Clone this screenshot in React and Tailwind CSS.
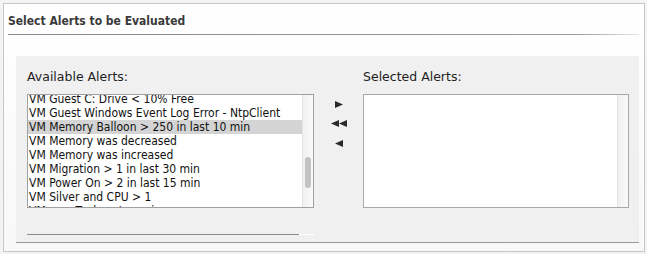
import React from 'react';

const alerts = [
  'VM Guest C: Drive < 10% Free',
  'VM Guest Windows Event Log Error - NtpClient',
  'VM Memory Balloon > 250 in last 10 min',
  'VM Memory was decreased',
  'VM Memory was increased',
  'VM Migration > 1 in last 30 min',
  'VM Power On > 2 in last 15 min',
  'VM Silver and CPU > 1',
  'VMware Tools not running',
];

const selectedIndex = 2;

const Arrow = ({ dir = 'right', double = false }) => {
  const tri = dir === 'right' ? 'M0 0 L8 3.5 L0 7 Z' : 'M8 0 L0 3.5 L8 7 Z';
  return (
    <svg width={double ? 16 : 8} height="7" viewBox={double ? '0 0 16 7' : '0 0 8 7'}>
      <path d={tri} fill="#2a2a2a" />
      {double && <path d={tri} fill="#2a2a2a" transform="translate(8 0)" />}
    </svg>
  );
};

const ScrollTrack = ({ thumb }) => (
  <div className="w-[11px] h-full bg-gradient-to-r from-[#f0f0f0] to-[#fafafa] border-l border-[#e4e4e4] relative">
    {thumb && (
      <div className="absolute left-[2px] top-[62px] w-[6px] h-[31px] rounded-full bg-[#c3c3c3]" />
    )}
  </div>
);

const condensed = { fontFamily: '"DejaVu Sans Condensed", "DejaVu Sans", sans-serif' };

export default function App() {
  return (
    <div className="w-[647px] h-[254px] bg-[#f3f3f3] pt-[3px] pl-[3px]" style={{ fontFamily: '"DejaVu Sans", "Liberation Sans", sans-serif' }}>
      <div className="w-[642px] h-[249px] border border-[#c8c8c8] bg-gradient-to-b from-white to-[#f8f8f8] flex flex-col">
        <div className="pl-[4px] pr-[4px] pt-[10px]">
          <div className="text-[12px] font-bold text-[#3a3a3a] leading-[15px]" style={condensed}>
            Select Alerts to be Evaluated
          </div>
          <div className="mt-[5px] h-px w-[631px] bg-gradient-to-r from-[#8a8a8a] via-[#9a9a9a] via-90% to-[#e8e8e8]" />
        </div>

        <div className="ml-[12px] mt-[21px] w-[623px] h-[187px] bg-[#f0f0f0] border-b border-[#999] pl-[11px] pr-[10px] pt-[13px] flex">
          <div className="flex flex-col">
            <div className="text-[12.5px] text-[#1e1e1e] leading-[16px] h-[25px]">Available Alerts:</div>
            <div className="w-[287px] h-[114px] border border-[#9f9f9f] bg-white flex overflow-hidden">
              <div className="flex-1 overflow-hidden">
                <div className="-mt-[3px]" style={condensed}>
                  {alerts.map((a, i) => (
                    <div
                      key={a}
                      className={`h-[14px] leading-[14px] pl-[1px] text-[12px] text-[#111] whitespace-nowrap ${i === selectedIndex ? 'bg-[#d4d4d4]' : ''}`}
                    >
                      {a}
                    </div>
                  ))}
                </div>
              </div>
              <ScrollTrack thumb />
            </div>
            <div className="mt-[26px] flex w-[287px]">
              <div className="w-[272px] h-px bg-[#8c8c8c]" />
              <div className="flex-1 h-px bg-white" />
            </div>
          </div>

          <div className="w-[50px] pt-[32px] flex flex-col items-center">
            <div className="h-[7px] flex items-center justify-center"><Arrow dir="right" /></div>
            <div className="mt-[12px] h-[7px] flex items-center justify-center"><Arrow dir="left" double /></div>
            <div className="mt-[13px] h-[7px] flex items-center justify-center"><Arrow dir="left" /></div>
          </div>

          <div className="flex flex-col">
            <div className="text-[12.5px] text-[#1e1e1e] leading-[16px] h-[25px]">Selected Alerts:</div>
            <div className="w-[266px] h-[114px] border border-[#a8a8a8] bg-white flex justify-end">
              <ScrollTrack />
            </div>
          </div>
        </div>
      </div>
    </div>
  );
}
